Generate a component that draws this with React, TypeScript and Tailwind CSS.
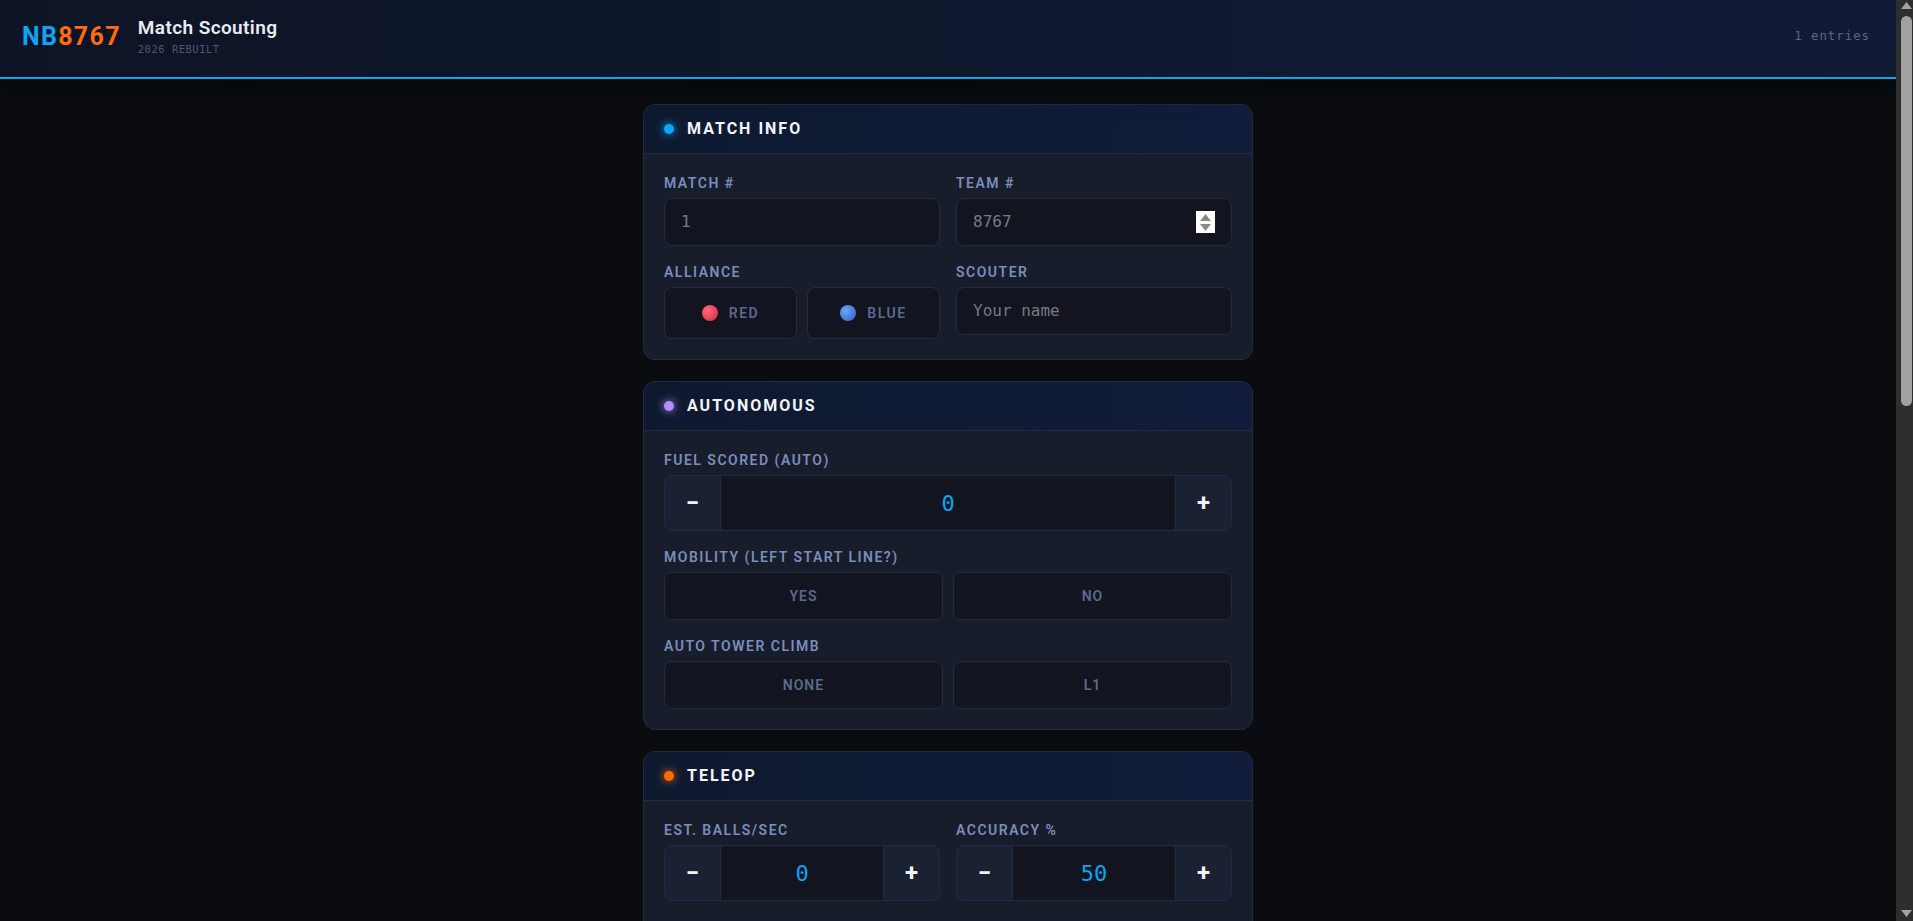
import React from "react";

const HEAD = { fontFamily: "Roboto, 'Liberation Sans', sans-serif" };
const MONO = { fontFamily: "'DejaVu Sans Mono', 'Liberation Mono', monospace" };

function Card({ title, dot, children }: { title: string; dot: string; children: React.ReactNode }) {
  return (
    <section className="rounded-xl border border-[#232b40] bg-[#181d2b] overflow-hidden">
      <div className="h-[49px] flex items-center gap-[13px] px-5 border-b border-[#232b40] bg-linear-to-r from-[#0e1930] to-[#111d3a]">
        <span className={"w-[10px] h-[10px] rounded-full " + dot} />
        <h2 style={HEAD} className="text-[16px] font-bold tracking-[2px] text-[#f1f5f9]">{title}</h2>
      </div>
      <div className="px-5 pt-[21px] pb-5 flex flex-col gap-[18px]">{children}</div>
    </section>
  );
}

function Label({ children }: { children: React.ReactNode }) {
  return (
    <div style={HEAD} className="text-[14px] leading-[16px] font-semibold tracking-[1.5px] text-[#7b8dbc] mb-[7px]">
      {children}
    </div>
  );
}

function Field({ label, children, className = "" }: { label: string; children: React.ReactNode; className?: string }) {
  return (
    <div className={"flex flex-col min-w-0 " + className}>
      <Label>{label}</Label>
      {children}
    </div>
  );
}

function TextBox({ value, placeholder, spinner }: { value?: string; placeholder?: string; spinner?: boolean }) {
  return (
    <div className="h-[48px] rounded-lg border border-[#232b40] bg-[#12151f] flex items-center justify-between pl-4 pr-4">
      <span style={MONO} className="text-[16px] text-[#767a84]">{value ?? placeholder}</span>
      {spinner && (
        <span className="w-[19px] h-[22px] bg-white flex flex-col items-center justify-center gap-[3px]">
          <svg width="11" height="7" viewBox="0 0 11 7"><path d="M5.5 0 L11 7 L0 7 Z" fill="#8a8a8a" /></svg>
          <svg width="11" height="7" viewBox="0 0 11 7"><path d="M0 0 L11 0 L5.5 7 Z" fill="#8a8a8a" /></svg>
        </span>
      )}
    </div>
  );
}

function Stepper({ value }: { value: string }) {
  return (
    <div className="h-[56px] rounded-lg border border-[#232b40] bg-[#1a2132] flex overflow-hidden">
      <button style={HEAD} className="w-[55px] shrink-0 flex items-center justify-center text-[24px] font-bold text-[#eef2f7]">−</button>
      <div style={MONO} className="flex-1 flex items-center justify-center bg-[#12151f] border-x border-[#232b40] text-[22px] text-[#0ba5f5]">
        {value}
      </div>
      <button style={HEAD} className="w-[55px] shrink-0 flex items-center justify-center text-[24px] font-bold text-[#eef2f7]">+</button>
    </div>
  );
}

function Toggles({ options, h = "h-[48px]", cols = "grid-cols-2" }: { options: string[]; h?: string; cols?: string }) {
  return (
    <div className={"grid gap-[10px] " + cols}>
      {options.map((o) => (
        <button
          key={o}
          style={HEAD}
          className={"rounded-lg border border-[#232b40] bg-[#12151f] text-[14px] font-semibold tracking-[1px] text-[#5b6a8e] " + h}
        >
          {o}
        </button>
      ))}
    </div>
  );
}

function Scrollbar() {
  return (
    <div className="w-[17px] shrink-0 h-screen bg-[#2e2e2e] flex flex-col pl-[5px] pr-[1px]">
      <div className="h-[16px] flex items-start pt-[2px] justify-center">
        <svg width="11" height="7" viewBox="0 0 11 7"><path d="M5.5 0 L11 7 L0 7 Z" fill="#a3a3a3" /></svg>
      </div>
      <div className="h-[390px] rounded-full bg-[#a1a1a1]" />
      <div className="flex-1" />
      <div className="h-[16px] flex items-end pb-[4px] justify-center">
        <svg width="11" height="7" viewBox="0 0 11 7"><path d="M0 0 L11 0 L5.5 7 Z" fill="#a3a3a3" /></svg>
      </div>
    </div>
  );
}

export default function App() {
  return (
    <div className="h-screen flex overflow-hidden bg-[#0a0c10]">
      <div className="flex-1 min-w-0 h-screen overflow-hidden">
        <header className="relative z-10 h-[79px] border-b-2 border-[#0ea5f0] bg-linear-to-r from-[#0d1425] to-[#111b36] shadow-[0_6px_24px_rgba(0,0,0,0.55)] flex items-center justify-between pl-[22px] pr-[26px] pb-[4px]">
          <div className="flex items-center gap-[17px]">
            <div style={HEAD} className="text-[25px] font-bold tracking-[1.3px] leading-none">
              <span className="text-[#0ea5f5]">NB</span>
              <span className="text-[#ff6a10]">8767</span>
            </div>
            <div className="flex flex-col gap-[7px]">
              <div style={HEAD} className="text-[19px] font-semibold leading-none text-[#e8ebf2] tracking-[0.4px]">Match Scouting</div>
              <div style={MONO} className="text-[10.5px] leading-none tracking-[0.5px] text-[#4d5873]">2026 REBUILT</div>
            </div>
          </div>
          <div style={MONO} className="text-[12.5px] tracking-[0.9px] text-[#5a6683]">1 entries</div>
        </header>

        <main className="w-[610px] mx-auto pt-[25px] pb-10 flex flex-col gap-[21px]">
          <Card title="MATCH INFO" dot="bg-[#0aa6ff] shadow-[0_0_8px_#0aa6ff]">
            <div className="grid grid-cols-2 gap-4">
              <Field label="MATCH #">
                <TextBox value="1" />
              </Field>
              <Field label="TEAM #">
                <TextBox value="8767" spinner />
              </Field>
            </div>
            <div className="grid grid-cols-2 gap-4">
              <Field label="ALLIANCE">
                <div className="grid grid-cols-2 gap-[10px]">
                  <button style={HEAD} className="h-[52px] rounded-lg border border-[#232b40] bg-[#12151f] flex items-center justify-center gap-[11px] text-[14px] font-semibold tracking-[1.5px] text-[#5b6a8e]">
                    <span className="w-[16px] h-[16px] rounded-full bg-[radial-gradient(circle_at_35%_35%,#ff6b7a,#d7263f)]" />
                    RED
                  </button>
                  <button style={HEAD} className="h-[52px] rounded-lg border border-[#232b40] bg-[#12151f] flex items-center justify-center gap-[11px] text-[14px] font-semibold tracking-[1.5px] text-[#5b6a8e]">
                    <span className="w-[16px] h-[16px] rounded-full bg-[radial-gradient(circle_at_35%_35%,#6aa8f5,#2c5ec9)]" />
                    BLUE
                  </button>
                </div>
              </Field>
              <Field label="SCOUTER">
                <TextBox placeholder="Your name" />
              </Field>
            </div>
          </Card>

          <Card title="AUTONOMOUS" dot="bg-[#b38cff] shadow-[0_0_8px_#b38cff]">
            <Field label="FUEL SCORED (AUTO)">
              <Stepper value="0" />
            </Field>
            <Field label="MOBILITY (LEFT START LINE?)">
              <Toggles options={["YES", "NO"]} />
            </Field>
            <Field label="AUTO TOWER CLIMB">
              <Toggles options={["NONE", "L1"]} />
            </Field>
          </Card>

          <Card title="TELEOP" dot="bg-[#ff6a00] shadow-[0_0_8px_#ff6a00]">
            <div className="grid grid-cols-2 gap-4">
              <Field label="EST. BALLS/SEC">
                <Stepper value="0" />
              </Field>
              <Field label="ACCURACY %">
                <Stepper value="50" />
              </Field>
            </div>
            <Field label="PLAYED DEFENSE?" className="mt-[8px]">
              <Toggles options={["YES", "NO"]} />
            </Field>
          </Card>
        </main>
      </div>
      <Scrollbar />
    </div>
  );
}
